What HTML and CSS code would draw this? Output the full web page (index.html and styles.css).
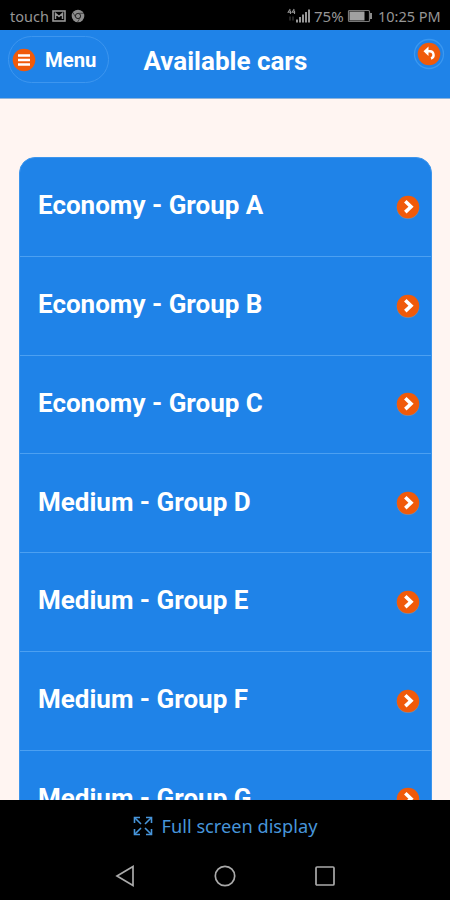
FILE: index.html
```
<!DOCTYPE html>
<html lang="en">
<head>
    <meta charset="UTF-8">
    <meta name="viewport" content="width=device-width, initial-scale=1.0">
    <title>Available cars</title>
    <link rel="stylesheet" href="styles.css">
</head>
<body>
    <div class="status-bar">
        <span class="carrier">touch</span>
        <svg class="mail-icon" width="14" height="12" viewBox="0 0 14 12">
            <rect x="1" y="1" width="12" height="10" fill="none" stroke="#969696" stroke-width="1.6"/>
            <path d="M3.500 9V3.500L7 6.500l3.500-3V9" fill="none" stroke="#969696" stroke-width="1.5"/>
        </svg>
        <svg class="chrome-icon" width="14" height="14" viewBox="0 0 14 14">
            <circle cx="7" cy="7" r="6.3" fill="#8c8c8c"/>
            <circle cx="7" cy="7" r="2.6" fill="#8c8c8c" stroke="#222" stroke-width="1"/>
            <path d="M7 4.3h6M4.7 8.4L2 3.6M9.3 8.4L6.6 13" stroke="#333" stroke-width=".8"/>
        </svg>
        <svg class="signal-icon" width="24" height="16" viewBox="0 0 24 16">
            <path d="M3.200 1L1.200 4.300h3M3.500 2.500V6M7.200 1L5.200 4.300h3M7.500 2.500V6" fill="none" stroke="#969696" stroke-width="1.1"/>
            <path d="M3 8.500v4M6 8.500v4" stroke="#333" stroke-width="1.5"/>
            <path d="M10 14.500v-3M13 14.500V9M16 14.500V6.500M19 14.500V4M22 14.500V1.500" stroke="#969696" stroke-width="2"/>
        </svg>
        <span class="percent">75%</span>
        <svg class="battery-icon" width="27" height="14" viewBox="0 0 27 14">
            <rect x="1.500" y="1.500" width="21" height="11" rx="1" fill="none" stroke="#777" stroke-width="1.200"/>
            <rect x="2.500" y="2.500" width="15" height="9" fill="#a0a0a0"/>
            <path d="M24 4v6" stroke="#8c8c8c" stroke-width="2"/>
        </svg>
        <span class="clock">10:25 PM</span>
    </div>

    <header class="header">
        <button class="menu-btn">
            <svg width="24" height="24" viewBox="0 0 24 24">
                <circle cx="12" cy="12" r="11.300" fill="#f05a0a"/>
                <path d="M6 7.500h12M6 12h12M6 16.500h12" stroke="#fff" stroke-width="2.600"/>
            </svg>
            <span>Menu</span>
        </button>
        <h1>Available cars</h1>
        <button class="back-btn">
            <svg width="32" height="32" viewBox="0 0 32 32">
                <circle cx="16" cy="16" r="14.500" fill="none" stroke="#3a97f0" stroke-width="1.300"/>
                <circle cx="16" cy="16" r="11.300" fill="#f05a0a"/>
                <path d="M14 13.300h2.500a3.700 3.700 0 0 1 1.500 7.200" fill="none" stroke="#fff" stroke-width="2.400"/>
                <path d="M10.500 13.300l5-4.700v9.400z" fill="#fff"/>
            </svg>
        </button>
    </header>

    <main class="content">
        <ul class="car-list">
            <li><span>Economy - Group A</span><i class="arrow"></i></li>
            <li><span>Economy - Group B</span><i class="arrow"></i></li>
            <li><span>Economy - Group C</span><i class="arrow"></i></li>
            <li><span>Medium - Group D</span><i class="arrow"></i></li>
            <li><span>Medium - Group E</span><i class="arrow"></i></li>
            <li><span>Medium - Group F</span><i class="arrow"></i></li>
            <li><span>Medium - Group G</span><i class="arrow"></i></li>
        </ul>
    </main>

    <footer class="bottom">
        <div class="fullscreen">
            <svg width="20" height="20" viewBox="0 0 20 20" fill="none" stroke="#4795da" stroke-width="1.600">
                <path d="M1.500 7V1.500H7M13 1.500h5.500V7M18.500 13v5.500H13M7 18.500H1.500V13"/>
                <path d="M2 2l6 6M18 2l-6 6M18 18l-6-6M2 18l6-6"/>
            </svg>
            <span>Full screen display</span>
        </div>
        <nav class="nav-keys">
            <svg width="22" height="24" viewBox="0 0 22 24"><path d="M3 12L19 2.500v19z"/></svg>
            <svg width="24" height="24" viewBox="0 0 24 24"><circle cx="12" cy="12" r="9.700"/></svg>
            <svg width="22" height="24" viewBox="0 0 22 24"><rect x="2" y="3" width="18" height="18" rx="1"/></svg>
        </nav>
    </footer>

    <script>
        // Same arrow icon for every row
        document.querySelectorAll('.arrow').forEach(function(el) {
            el.innerHTML = '<svg width="24" height="24" viewBox="0 0 24 24">' +
                '<circle cx="12" cy="12.8" r="11.2" fill="#7d8ca5"/>' +
                '<circle cx="12" cy="12" r="11.2" fill="#f05a0a"/>' +
                '<path d="M9.300 6.300l5.700 5.400-5.700 5.400" fill="none" stroke="#fff" stroke-width="3.600"/></svg>';
        });
    </script>
</body>
</html>
```
FILE: styles.css
```
* {
    box-sizing: border-box;
    margin: 0;
    padding: 0;
}

body {
    width: 450px;
    height: 900px;
    display: flex;
    flex-direction: column;
    overflow: hidden;
    background-color: #fff5f2;
    font-family: Roboto, Arial, sans-serif;
}

svg {
    display: block;
    flex: none;
}

.status-bar {
    display: flex;
    align-items: center;
    flex: none;
    height: 30px;
    padding: 1px 10px 0;
    background-color: #000;
    color: #969696;
    font-family: "Noto Sans", sans-serif;
    font-size: 14.5px;
    white-space: nowrap;
}

.carrier {
    width: 42px;
}

.chrome-icon {
    margin-left: 5px;
}

.signal-icon {
    margin-left: auto;
}

.percent {
    width: 30px;
    margin-left: 3px;
    font-size: 15px;
}

.battery-icon {
    margin-left: 3px;
}

.clock {
    width: 62px;
    margin-left: 4px;
}

.header {
    display: flex;
    align-items: flex-start;
    flex: none;
    height: 69px;
    padding: 6px 5px 0 8px;
    background-color: #1f83e8;
    border-bottom: 1px solid #8fb4da;
    color: #fff;
}

.menu-btn {
    display: flex;
    align-items: center;
    width: 101px;
    height: 47px;
    padding-left: 3px;
    gap: 9px;
    background: none;
    border: 1px solid #3d96ef;
    border-radius: 24px;
    color: #fff;
    font-family: inherit;
    font-size: 20.3px;
    font-weight: bold;
}

h1 {
    margin: 10px 0 0 34.5px;
    font-size: 26px;
    line-height: 30px;
    white-space: nowrap;
}

.back-btn {
    margin: 2px 0 0 auto;
    background: none;
    border: none;
}

.content {
    flex: 1;
    min-height: 0;
    padding: 58px 18px 0 19px;
    overflow: hidden;
}

.car-list {
    list-style: none;
    background-color: #1f83e8;
    border: 1px solid #3c95ed;
    border-radius: 16px;
}

.car-list li {
    display: flex;
    align-items: center;
    justify-content: space-between;
    height: 98.75px;
    padding: 0 11px 3px 18px;
    border-bottom: 1px solid #4ca0f1;
    color: #fff;
    font-size: 26px;
    font-weight: bold;
}

.arrow {
    margin-top: 3px;
}

.bottom {
    flex: none;
    height: 100px;
    background-color: #000;
}

.fullscreen {
    display: flex;
    align-items: center;
    justify-content: center;
    gap: 9px;
    height: 51px;
    color: #4795da;
    font-family: "Noto Sans", sans-serif;
    font-size: 18.2px;
}

.nav-keys {
    display: flex;
    justify-content: space-between;
    padding: 13px 114px 0;
}

.nav-keys svg {
    fill: none;
    stroke: #aaa;
    stroke-width: 1.7;
}
```
